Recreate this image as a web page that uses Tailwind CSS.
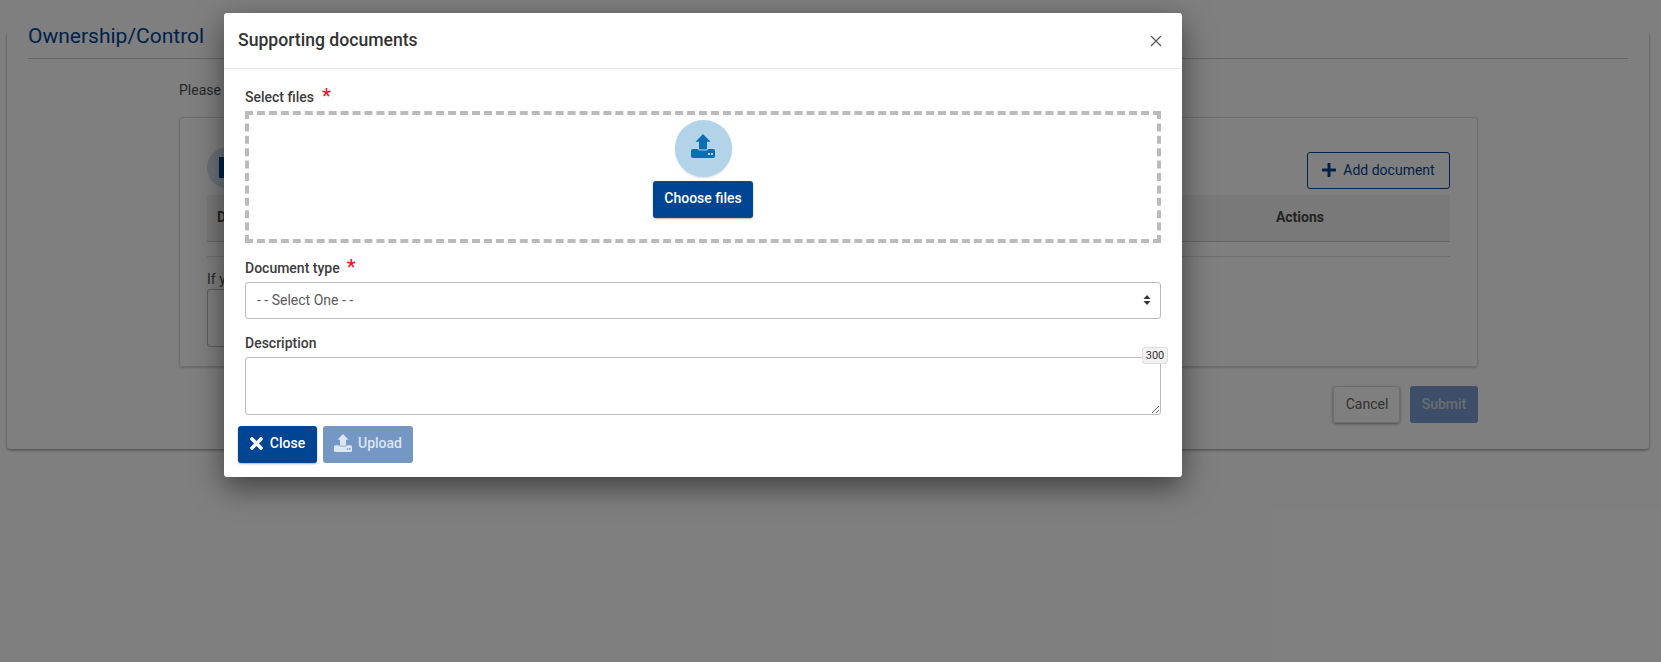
<!DOCTYPE html>
<html lang="en">

<head>
  <meta charset="UTF-8" />
  <meta name="viewport" content="width=device-width, initial-scale=1.0" />
  <title>Supporting documents</title>
  <script src="https://cdn.jsdelivr.net/npm/@tailwindcss/browser@4"></script>
</head>

<body class="relative h-[662px] overflow-hidden bg-white font-['Roboto',sans-serif] text-sm text-[#3c3c3c]">

  <!-- Page behind the dialog -->
  <main class="relative mx-[7px] mt-[30px] h-[419px] w-[1642px] rounded-[3px] bg-white px-[21px] before:absolute before:inset-x-0 before:top-[3px] before:bottom-0 before:rounded-[3px] before:shadow-[0_1px_3px_rgba(0,0,0,0.45)] before:[clip-path:inset(0_-10px_-10px_-10px)]">
    <h1 class="h-[29px] border-b border-[#ccc] text-[21px] leading-[12px] text-[#004494]">Ownership/Control</h1>
    <div class="ml-[151px] w-[1299px]">
      <p class="mt-[21px] h-[20px] leading-[20px] text-[#505050]">Please</p>
      <section class="mt-[17px] h-[250px] rounded-[3px] border border-[#ddd] px-[27px] shadow-[0_1px_2px_rgba(0,0,0,0.2)]">
        <div class="flex h-[77px] items-start justify-between">
          <div class="mt-[29px] flex h-[41px] w-[41px] items-center justify-center rounded-full bg-[#d5e2ef]">
            <div class="ml-[3px] h-[21px] w-[21px] bg-[#004494]"></div>
          </div>
          <button class="mt-[34px] flex h-[37px] w-[143px] items-center justify-center gap-[7px] rounded-[3px] border border-[#004494] pb-[2px] text-[#004494]">
            <svg class="h-[14px] w-[14px]" viewBox="0 32 448 448" fill="currentColor"><path d="M416 208H272V64c0-17.67-14.33-32-32-32h-32c-17.67 0-32 14.33-32 32v144H32c-17.67 0-32 14.33-32 32v32c0 17.67 14.33 32 32 32h144v144c0 17.67 14.33 32 32 32h32c17.67 0 32-14.33 32-32V304h144c17.67 0 32-14.33 32-32v-32c0-17.67-14.33-32-32-32z"/></svg>
            Add document
          </button>
        </div>
        <div class="flex h-[47px] items-center justify-between border-b border-[#ccc] bg-[#f2f2f2] pr-[126px] pb-[2px] pl-[10px] font-bold text-[#484848]">
          <span>Document</span>
          <span>Actions</span>
        </div>
        <div class="h-[15px] border-b border-[#ddd]"></div>
        <p class="mt-[13px] h-[18px] leading-[18px] text-[#505050]">If you</p>
        <div class="mt-[1px] h-[58px] w-[400px] rounded-[3px] border border-[#bbb]"></div>
      </section>
      <div class="mt-[19px] flex justify-end gap-[10px]">
        <button class="h-[37px] w-[67px] rounded-[3px] border border-[#ddd] pb-[2px] pl-[1px] text-[#666] shadow-[0_1px_3px_rgba(0,0,0,0.4)]">Cancel</button>
        <button class="h-[37px] w-[68px] rounded-[3px] bg-[#7a9fd0] pb-[2px] font-medium text-[#cfd9e6]">Submit</button>
      </div>
    </div>
  </main>

  <!-- Backdrop + dialog -->
  <div class="absolute inset-0 bg-black/50"></div>

  <div class="absolute top-[13px] left-[224px] h-[464px] w-[958px] rounded-[3px] bg-white shadow-[0_10px_30px_rgba(0,0,0,0.5)]">
    <header class="flex h-[56px] items-center justify-between border-b border-[#e9ecef] pr-[20px] pl-[14px]">
      <h2 class="text-[17.6px] font-medium text-[#333]">Supporting documents</h2>
      <svg class="h-[12px] w-[12px]" viewBox="0 0 12 12" stroke="#555" stroke-width="1.2" fill="none"><path d="M1 1l10 10M11 1L1 11"/></svg>
    </header>

    <div class="px-[21px]">
      <label class="flex h-[42px] items-end pb-[4px] font-medium">Select files <span class="mb-[1px] ml-[8px] text-[20px] leading-[20px] text-[#e6192e]">*</span></label>

      <div class="flex h-[132px] w-[916px] flex-col items-center border-4 border-dashed border-[#bbb] pt-[5px]">
        <div class="flex h-[57px] w-[57px] items-center justify-center rounded-full bg-[#b3d4e8] shadow-[0_1px_2px_rgba(0,0,0,0.15)]">
          <svg class="mb-[5px] h-[24px] w-[24px]" viewBox="0 0 24 24" fill="#0d6db3" fill-rule="evenodd"><path d="M12 0L19.5 7.7H16V14.5Q16 15.5 15 15.5H9Q8 15.5 8 14.5V7.7H4.5Z"/><path d="M2 15H7Q7.2 16.5 9 16.5H15Q16.8 16.5 17 15H22Q24 15 24 17V22Q24 24 22 24H2Q0 24 0 22V17Q0 15 2 15ZM17 19h2v2h-2zM20 19h2v2h-2z"/></svg>
        </div>
        <button class="mt-[4px] h-[37px] w-[100px] rounded-[3px] bg-[#004494] pb-[3px] font-medium text-white shadow-[0_1px_2px_rgba(0,0,0,0.3)]">Choose files</button>
      </div>

      <label class="mt-[14px] flex h-[25px] items-end pb-[4px] font-medium">Document type <span class="mb-[1px] ml-[7px] text-[20px] leading-[20px] text-[#e6192e]">*</span></label>
      <div class="relative h-[37px] w-[916px]">
        <select class="h-full w-full appearance-none rounded-[3px] border border-[#bbb] bg-white pb-[2px] pl-[11px] text-[#5a5a5a]">
          <option>- - Select One - -</option>
        </select>
        <svg class="pointer-events-none absolute top-[12px] right-[10px] h-[12px] w-[8px]" viewBox="0 0 8 12" fill="#333"><path d="M4 1l3.5 4h-7zM4 11L.5 7h7z"/></svg>
      </div>

      <label class="mt-[14px] block h-[24px] leading-[20px] font-medium">Description</label>
      <div class="relative h-[58px] w-[916px]">
        <textarea class="block h-[58px] w-full rounded-[3px] border border-[#bbb] bg-white"></textarea>
        <span class="absolute -top-[10px] -right-[7px] flex h-[17px] w-[26px] items-center justify-center rounded-[3px] border border-[#ddd] bg-[#f2f2f2] text-[11px] text-[#333]">300</span>
      </div>
    </div>

    <footer class="mt-[11px] flex gap-[6px] pl-[14px]">
      <button class="flex h-[37px] w-[79px] items-center justify-center gap-[7px] rounded-[3px] bg-[#004494] pb-[3px] font-medium text-white shadow-[0_1px_2px_rgba(0,0,0,0.3)]">
        <svg class="h-[13px] w-[13px]" viewBox="0 80 352 352" fill="currentColor"><path d="M242.72 256l100.07-100.07c12.28-12.28 12.28-32.19 0-44.48l-22.24-22.24c-12.28-12.28-32.19-12.28-44.48 0L176 189.28 75.93 89.21c-12.28-12.28-32.19-12.28-44.48 0L9.21 111.45c-12.28 12.28-12.28 32.19 0 44.48L109.28 256 9.21 356.07c-12.28 12.28-12.28 32.19 0 44.48l22.24 22.24c12.28 12.28 32.2 12.28 44.48 0L176 322.72l100.07 100.07c12.28 12.28 32.2 12.28 44.48 0l22.24-22.24c12.28-12.28 12.28-32.19 0-44.48L242.72 256z"/></svg>
        Close
      </button>
      <button class="flex h-[37px] w-[90px] items-center justify-center gap-[6px] rounded-[3px] bg-[#7497c4] pb-[3px] font-medium text-[#dce5f0]">
        <svg class="mb-[1px] h-[18px] w-[18px]" viewBox="0 0 24 24" fill="currentColor" fill-rule="evenodd"><path d="M12 0L19.5 7.7H16V14.5Q16 15.5 15 15.5H9Q8 15.5 8 14.5V7.7H4.5Z"/><path d="M2 15H7Q7.2 16.5 9 16.5H15Q16.8 16.5 17 15H22Q24 15 24 17V22Q24 24 22 24H2Q0 24 0 22V17Q0 15 2 15ZM17 19h2v2h-2zM20 19h2v2h-2z"/></svg>
        Upload
      </button>
    </footer>
  </div>

</body>

</html>
